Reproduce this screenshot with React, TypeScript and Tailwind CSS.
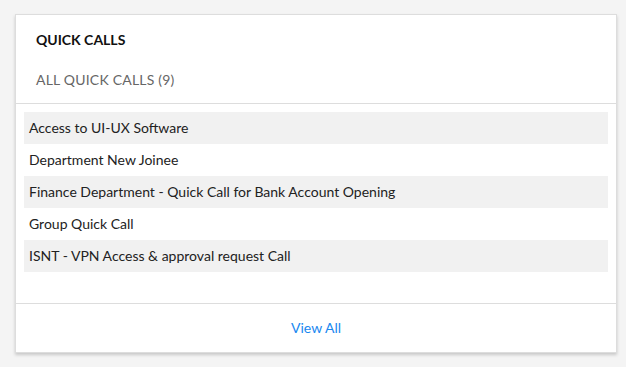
const calls = [
  "Access to UI-UX Software",
  "Department New Joinee",
  "Finance Department - Quick Call for Bank Account Opening",
  "Group Quick Call",
  "ISNT - VPN Access & approval request Call",
];

export default function App() {
  return (
    <div className="h-[367px] bg-[#f4f4f4] pl-[15px] pr-[9px] pt-[14px] font-['Lato',sans-serif] text-[14px]">
      <div className="h-[339px] border border-[#dddddd] bg-white shadow-[0_2px_3px_rgba(0,0,0,0.18)]">
        <div className="h-[89px] border-b border-[#dddddd] px-[20px] pt-[14px]">
          <div className="h-[22px] leading-[22px] font-bold text-[#111]">QUICK CALLS</div>
          <div className="mt-[18px] h-[22px] leading-[22px] tracking-[0.2px] text-[#666]">ALL QUICK CALLS (9)</div>
        </div>
        <div className="h-[200px] border-b border-[#dddddd] px-[8px] pt-[8px]">
          {calls.map((c, i) => (
            <div
              key={c}
              className={`h-[32px] px-[5px] leading-[32px] text-[#222] ${i % 2 === 0 ? "bg-[#f1f1f1]" : ""}`}
            >
              {c}
            </div>
          ))}
        </div>
        <div className="flex h-[47px] items-center justify-center">
          <a href="#" className="text-[#1a88f0]">View All</a>
        </div>
      </div>
    </div>
  );
}
